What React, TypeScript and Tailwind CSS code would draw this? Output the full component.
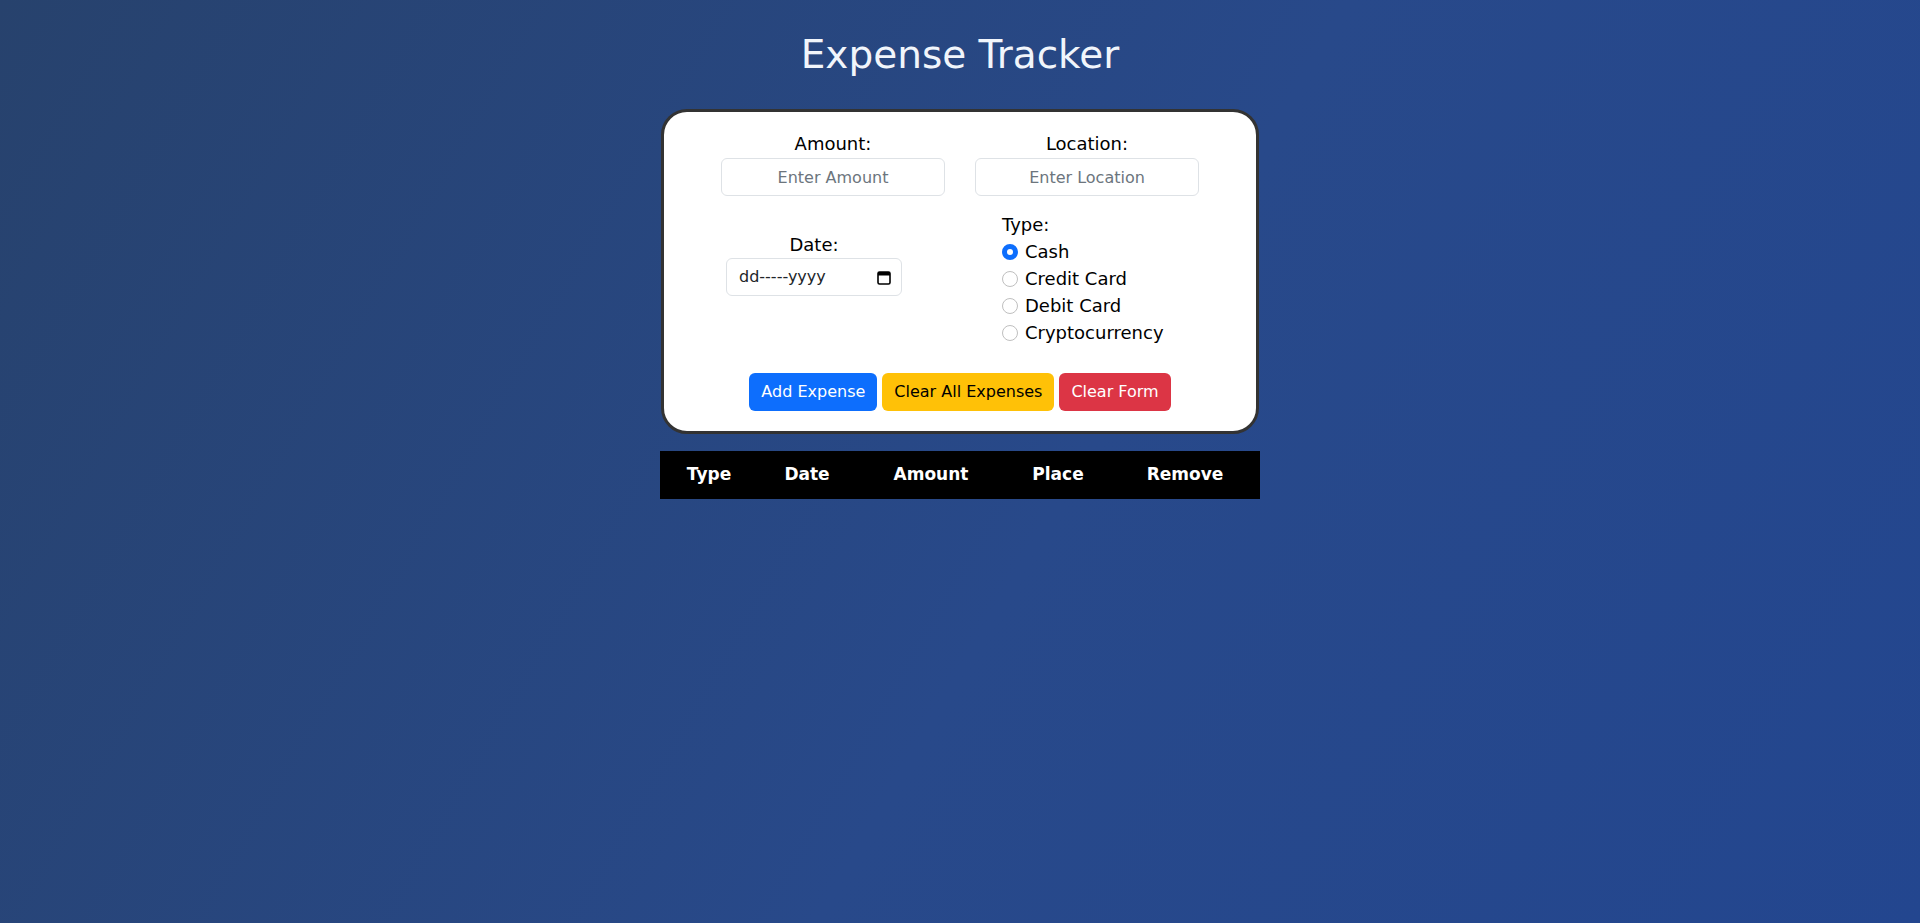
import { useState } from "react";

const font = { fontFamily: '"DejaVu Sans", "Liberation Sans", sans-serif' };

const types = ["Cash", "Credit Card", "Debit Card", "Cryptocurrency"];

function CalendarIcon() {
  return (
    <svg width="14" height="15" viewBox="0 0 14 15" fill="none">
      <rect x="1" y="2" width="12" height="12" rx="1.5" stroke="#000" strokeWidth="1.6" />
      <rect x="1" y="2" width="12" height="3.5" fill="#000" />
    </svg>
  );
}

export default function App() {
  const [type, setType] = useState("Cash");

  return (
    <div
      className="min-h-screen w-full bg-[linear-gradient(120deg,#27426d_0%,#28498a_55%,#23468f_100%)] text-[#212529] pt-[31px]"
      style={font}
    >
      <h1 className="text-center text-[39px] leading-[47px] font-normal text-[#f1f5fb]">
        Expense Tracker
      </h1>

      <div className="mx-auto mt-[31px] w-[598px] rounded-[26px] border-[3px] border-[#333333] bg-white pt-[18px] pb-[20px]">
        <div className="flex justify-center gap-[30px]">
          <div className="flex w-[224px] flex-col items-center">
            <label className="text-[18px] leading-[27px] font-medium text-black">Amount:</label>
            <input
              placeholder="Enter Amount"
              className="mt-px h-[38px] w-full rounded-[6px] border border-[#dee2e6] bg-white text-center text-[16px] outline-none placeholder:text-[#6c757d]"
            />
          </div>
          <div className="flex w-[224px] flex-col items-center">
            <label className="text-[18px] leading-[27px] font-medium text-black">Location:</label>
            <input
              placeholder="Enter Location"
              className="mt-px h-[38px] w-full rounded-[6px] border border-[#dee2e6] bg-white text-center text-[16px] outline-none placeholder:text-[#6c757d]"
            />
          </div>
        </div>

        <div className="mt-[15px] flex items-start pl-[62px]">
          <div className="mt-[20px] flex w-[176px] flex-col items-center">
            <label className="text-[18px] leading-[27px] text-black">Date:</label>
            <div className="flex h-[38px] w-full items-center justify-between rounded-[6px] border border-[#dee2e6] bg-white pl-[12px] pr-[10px] text-[16px] text-[#212529]">
              <span>dd-----yyyy</span>
              <CalendarIcon />
            </div>
          </div>

          <div className="ml-[100px] flex flex-col">
            <span className="text-[18px] leading-[27px] text-black">Type:</span>
            {types.map((t) => (
              <label key={t} className="flex items-center text-[18px] leading-[27px] text-black">
                <input
                  type="radio"
                  name="type"
                  checked={type === t}
                  onChange={() => setType(t)}
                  className="m-0 mr-[7px] h-4 w-4 appearance-none rounded-full border border-[#bfbfbf] bg-white checked:border-[5px] checked:border-[#0d6efd]"
                />
                {t}
              </label>
            ))}
          </div>
        </div>

        <div className="mt-[27px] flex justify-center gap-[5px]">
          <button className="h-[38px] rounded-[6px] bg-[#0d6efd] px-3 text-[16px] text-white">
            Add Expense
          </button>
          <button className="h-[38px] rounded-[6px] bg-[#ffc107] px-3 text-[16px] text-black">
            Clear All Expenses
          </button>
          <button className="h-[38px] rounded-[6px] bg-[#dc3545] px-3 text-[16px] text-white">
            Clear Form
          </button>
        </div>
      </div>

      <table className="mx-auto mt-[17px] w-[600px] table-fixed border-collapse bg-black text-white">
        <colgroup>
          <col className="w-[98px]" />
          <col className="w-[98px]" />
          <col className="w-[150px]" />
          <col className="w-[104px]" />
          <col className="w-[150px]" />
        </colgroup>
        <thead>
          <tr className="h-[48px]">
            <th className="text-center text-[17px] font-bold">Type</th>
            <th className="text-center text-[17px] font-bold">Date</th>
            <th className="text-center text-[17px] font-bold">Amount</th>
            <th className="text-center text-[17px] font-bold">Place</th>
            <th className="text-center text-[17px] font-bold">Remove</th>
          </tr>
        </thead>
        <tbody></tbody>
      </table>
    </div>
  );
}
